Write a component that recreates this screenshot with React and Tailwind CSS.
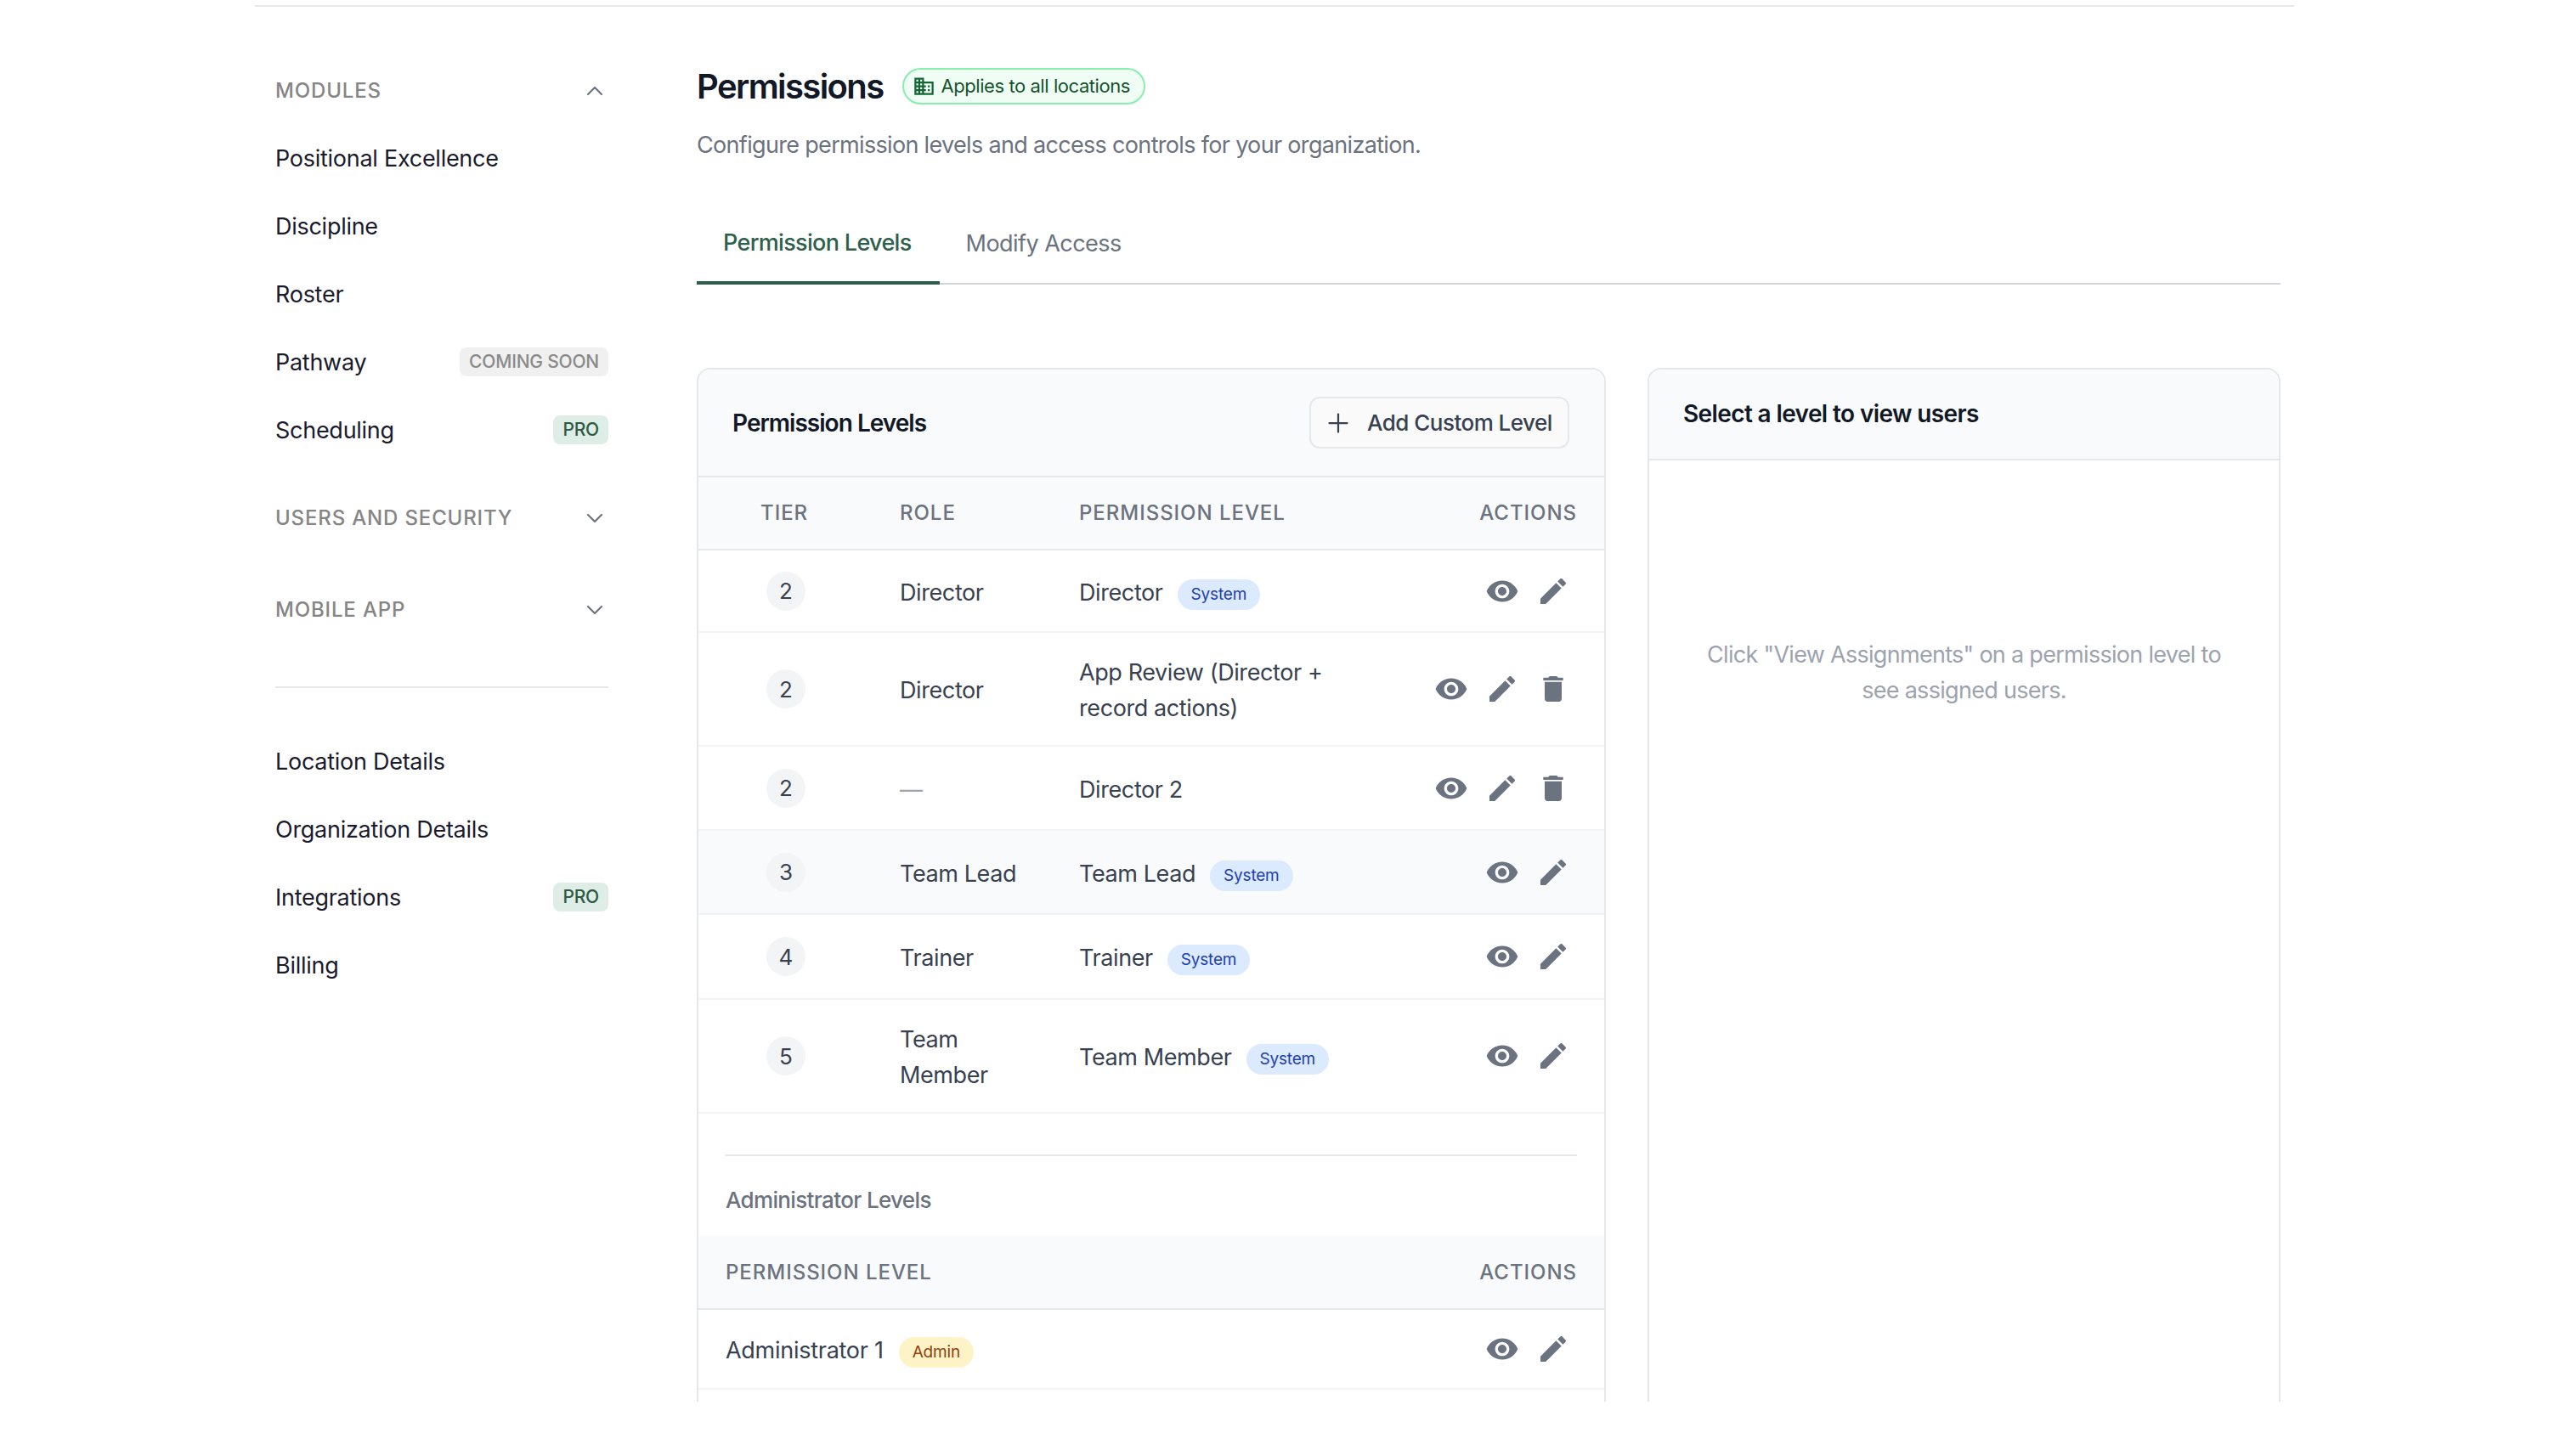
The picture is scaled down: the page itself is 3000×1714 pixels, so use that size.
import React from "react";
import { ChevronUp, ChevronDown, Plus } from "lucide-react";

const EYE = "M12 4.5C7 4.5 2.73 7.61 1 12c1.73 4.39 6 7.5 11 7.5s9.27-3.11 11-7.5c-1.73-4.39-6-7.5-11-7.5zM12 17c-2.76 0-5-2.24-5-5s2.24-5 5-5 5 2.24 5 5-2.24 5-5 5zm0-8c-1.66 0-3 1.34-3 3s1.34 3 3 3 3-1.34 3-3-1.34-3-3-3z";
const EDIT = "M3 17.25V21h3.75L17.81 9.94l-3.75-3.75L3 17.25zM20.71 7.04c.39-.39.39-1.02 0-1.41l-2.34-2.34c-.39-.39-1.02-.39-1.41 0l-1.83 1.83 3.75 3.75 1.83-1.83z";
const DEL = "M6 19c0 1.1.9 2 2 2h8c1.1 0 2-.9 2-2V7H6v12zM19 4h-3.5l-1-1h-5l-1 1H5v2h14V4z";
const DOMAIN = "M12 7V3H2v18h20V7H12zM6 19H4v-2h2v2zm0-4H4v-2h2v2zm0-4H4V9h2v2zm0-4H4V5h2v2zm4 12H8v-2h2v2zm0-4H8v-2h2v2zm0-4H8V9h2v2zm0-4H8V5h2v2zm10 12h-8v-2h2v-2h-2v-2h2v-2h-2V9h8v10zm-2-8h-2v2h2v-2zm0 4h-2v2h2v-2z";

function Ico({ d, className }) {
  return (
    <svg viewBox="0 0 24 24" fill="currentColor" className={className}>
      <path d={d} />
    </svg>
  );
}

function Actions({ del }) {
  return (
    <div className="flex items-center gap-[20px] text-[#6b7280]">
      <Ico d={EYE} className="w-[40px] h-[40px]" />
      <Ico d={EDIT} className="w-[40px] h-[40px]" />
      {del && <Ico d={DEL} className="w-[40px] h-[40px]" />}
    </div>
  );
}

function SectionHead({ label, open, className = "" }) {
  const C = open ? ChevronUp : ChevronDown;
  return (
    <div className={`h-[56px] flex items-center justify-between ${className}`}>
      <span className="text-[24px] font-medium tracking-[0.035em] text-[#858585]">{label}</span>
      <C size={32} strokeWidth={1.6} className="text-[#6b7280]" />
    </div>
  );
}

function Tag({ children, tone }) {
  const t = tone === "pro" ? "bg-[#deeee6] text-[#2d5a45]" : "bg-[#f0f0f0] text-[#8a8a8a]";
  return (
    <span className={`h-[34px] px-[11px] mb-[2px] flex items-center rounded-[8px] text-[21px] font-medium tracking-[-0.01em] ${t}`}>{children}</span>
  );
}

function NavItem({ children, tag, tone }) {
  return (
    <div className="h-[80px] flex items-center justify-between text-[27px] tracking-[-0.01em] text-[#1a1a2e]">
      <span>{children}</span>
      {tag && <Tag tone={tone}>{tag}</Tag>}
    </div>
  );
}

function Pill({ children, admin }) {
  return (
    <span
      className={`inline-flex items-center h-[36px] px-[16px] rounded-full text-[19px] tracking-[-0.01em] mt-[4px] ${
        admin ? "bg-[#fef3c7] text-[#92400e]" : "bg-[#dbeafe] text-[#1e40af]"
      }`}
    >
      {children}
    </span>
  );
}

function Row({ tier, role, level, sys, del, h, hover, dim }) {
  return (
    <div className={`flex items-center border-b-2 border-[#f3f4f6] pr-[40px] ${h} ${hover ? "bg-[#f9fafb]" : ""}`}>
      <div className="w-[237px] pl-[80px]">
        <span className="flex items-center justify-center w-[46px] h-[46px] rounded-full bg-[#f3f4f6] text-[26px] text-[#374151]">{tier}</span>
      </div>
      <div className={`w-[211px] pr-[60px] pt-[4px] text-[27px] leading-[42px] tracking-[-0.015em] ${dim ? "text-[#9ca3af]" : "text-[#374151]"}`}>{role}</div>
      <div className="flex-1 flex items-center gap-[17px] pr-[60px] pt-[4px] text-[27px] leading-[42px] tracking-[-0.015em] text-[#374151]">
        <span>{level}</span>
        {sys && <Pill>System</Pill>}
      </div>
      <Actions del={del} />
    </div>
  );
}

const thCls = "text-[24px] font-medium tracking-[0.04em] text-[#6b7280]";

export default function App() {
  return (
    <div className="w-[3000px] h-[1714px] bg-white pt-[6px] font-['Inter',sans-serif] overflow-hidden">
      <div className="w-[2400px] h-[1644px] ml-[300px] border-t-2 border-[#e5e7eb] flex overflow-hidden">
        <aside className="w-[520px] shrink-0 pl-[24px] pr-[104px] pt-[71px]">
          <SectionHead label="MODULES" open />
          <div className="mt-[12px]">
            <NavItem>Positional Excellence</NavItem>
            <NavItem>Discipline</NavItem>
            <NavItem>Roster</NavItem>
            <NavItem tag="COMING SOON">Pathway</NavItem>
            <NavItem tag="PRO" tone="pro">Scheduling</NavItem>
          </div>
          <SectionHead label="USERS AND SECURITY" className="mt-[35px]" />
          <SectionHead label="MOBILE APP" className="mt-[52px]" />
          <div className="h-[2px] bg-[#e5e7eb] mt-[62px]" />
          <div className="mt-[47px]">
            <NavItem>Location Details</NavItem>
            <NavItem>Organization Details</NavItem>
            <NavItem tag="PRO" tone="pro">Integrations</NavItem>
            <NavItem>Billing</NavItem>
          </div>
        </aside>

        <main className="flex-1 pr-[16px] pt-[72px]">
          <div className="flex items-center gap-[22px] h-[43px]">
            <h1 className="text-[40px] font-semibold tracking-[-0.04em] text-[#111827]">Permissions</h1>
            <span className="flex items-center gap-[7px] h-[43px] pl-[10px] pr-[16px] rounded-full border-2 border-[#86efac] bg-[#f0fdf4] text-[22px] tracking-[-0.02em] text-[#14532d]">
              <Ico d={DOMAIN} className="w-[27px] h-[27px] text-[#166534]" />
              Applies to all locations
            </span>
          </div>
          <p className="mt-[28px] text-[27px] leading-[40px] tracking-[-0.025em] text-[#6b7280]">
            Configure permission levels and access controls for your organization.
          </p>

          <div className="mt-[48px] flex h-[96px] border-b-2 border-[#d1d5db]">
            <div className="h-[96px] pl-[31px] pr-[33px] pt-[2px] flex items-center border-b-4 border-[#2d5f4a] text-[27px] font-medium tracking-[-0.025em] text-[#2d5f4a]">
              Permission Levels
            </div>
            <div className="h-[94px] px-[31px] pt-[2px] flex items-center text-[27px] tracking-[-0.02em] text-[#6b7280]">
              Modify Access
            </div>
          </div>

          <div className="mt-[98px] flex gap-[49px] items-start">
            <section className="w-[1070px] shrink-0 border-2 border-[#e5e7eb] rounded-[16px] overflow-hidden">
              <div className="h-[127px] bg-[#f9fafb] border-b-2 border-[#e5e7eb] flex items-center justify-between pl-[40px] pr-[41px]">
                <h2 className="text-[28px] font-semibold tracking-[-0.035em] text-[#111827]">Permission Levels</h2>
                <button className="h-[61px] w-[306px] flex items-center pl-[14px] gap-[16px] rounded-[12px] border-2 border-[#e5e7eb] bg-[#fafafa] text-[26px] font-medium tracking-[-0.02em] text-[#374151]">
                  <Plus size={36} strokeWidth={1.5} />
                  Add Custom Level
                </button>
              </div>
              <div className="h-[86px] bg-[#f9fafb] border-b-2 border-[#e5e7eb] flex items-center pr-[32px]">
                <div className={`w-[237px] pl-[73px] ${thCls}`}>TIER</div>
                <div className={`w-[211px] ${thCls}`}>ROLE</div>
                <div className={`flex-1 ${thCls}`}>PERMISSION LEVEL</div>
                <div className={thCls}>ACTIONS</div>
              </div>
              <Row tier="2" role="Director" level="Director" sys h="h-[97px]" />
              <Row tier="2" role="Director" level="App Review (Director + record actions)" del h="h-[134px]" />
              <Row tier="2" role="—" dim level="Director 2" del h="h-[99px]" />
              <Row tier="3" role="Team Lead" level="Team Lead" sys hover h="h-[99px]" />
              <Row tier="4" role="Trainer" level="Trainer" sys h="h-[100px]" />
              <Row tier="5" role="Team Member" level="Team Member" sys h="h-[134px]" />

              <div className="mx-[32px] mt-[48px] h-[2px] bg-[#e5e7eb]" />
              <div className="mx-[32px] h-[94px] pt-[8px] flex items-center text-[26px] font-medium tracking-[-0.025em] text-[#6b7280]">
                Administrator Levels
              </div>
              <div className="h-[87px] bg-[#f9fafb] border-b-2 border-[#e5e7eb] flex items-center justify-between px-[32px]">
                <div className={thCls}>PERMISSION LEVEL</div>
                <div className={thCls}>ACTIONS</div>
              </div>
              <div className="h-[94px] border-b-2 border-[#f3f4f6] flex items-center justify-between pl-[32px] pr-[40px]">
                <div className="flex items-center gap-[18px] pt-[4px] text-[27px] tracking-[-0.01em] text-[#374151]">
                  <span>Administrator 1</span>
                  <Pill admin>Admin</Pill>
                </div>
                <Actions />
              </div>
              <div className="h-[120px]" />
            </section>

            <section className="flex-1 h-[1300px] border-2 border-[#e5e7eb] rounded-[16px] overflow-hidden">
              <div className="h-[107px] bg-[#f9fafb] border-b-2 border-[#e5e7eb] flex items-center pl-[40px] pb-[2px]">
                <h2 className="text-[28px] font-semibold tracking-[-0.022em] text-[#111827]">Select a level to view users</h2>
              </div>
              <p className="mt-[208px] mx-auto w-[640px] text-center text-[27px] leading-[42px] tracking-[-0.026em] text-[#9ca3af]">
                Click "View Assignments" on a permission level to see assigned users.
              </p>
            </section>
          </div>
        </main>
      </div>
    </div>
  );
}
